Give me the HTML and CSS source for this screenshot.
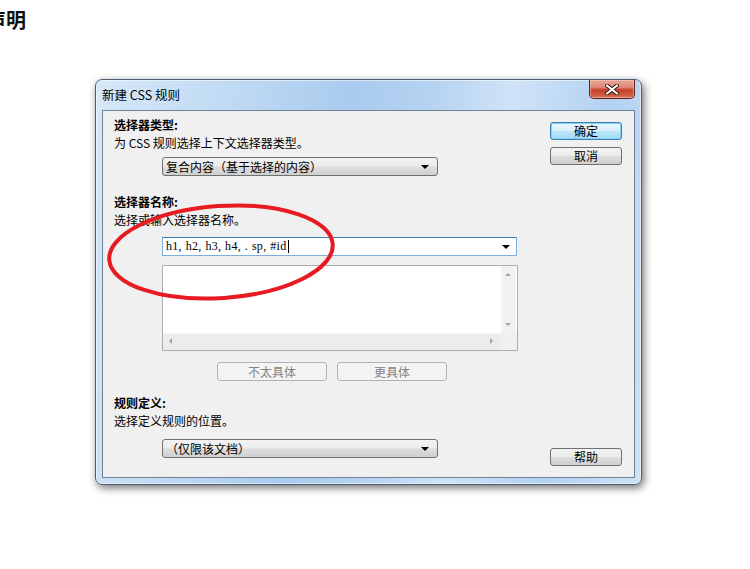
FILE: index.html
```html
<!DOCTYPE html>
<html>
<head>
<meta charset="utf-8">
<link rel="stylesheet" href="styles.css">
</head>
<body>
<div class="page">
  <div class="heading">声明</div>
  <div class="window">
    <div class="titlebar">
      <span class="title">新建 CSS 规则</span>
      <div class="close">
        <svg width="14" height="11" viewBox="0 0 14 11">
          <path d="M2 1.5 L12 9.5 M12 1.5 L2 9.5" stroke="#3a1510" stroke-width="4" stroke-linecap="round"/>
          <path d="M2 1.5 L12 9.5 M12 1.5 L2 9.5" stroke="#ffffff" stroke-width="2.2" stroke-linecap="round"/>
        </svg>
      </div>
    </div>
    <div class="client">
      <div class="main">
        <div class="label">选择器类型:</div>
        <div class="desc">为 CSS 规则选择上下文选择器类型。</div>
        <div class="select sel1"><span>复合内容（基于选择的内容）</span><i class="arrow"></i></div>
        <div class="label l2">选择器名称:</div>
        <div class="desc">选择或输入选择器名称。</div>
        <div class="combo"><span class="val">h1, h2, h3, h4, . sp, #id</span><span class="caret"></span><i class="arrow"></i></div>
        <div class="list">
          <div class="list-top">
            <div class="list-area"></div>
            <div class="vscroll"><i class="up"></i><i class="down"></i></div>
          </div>
          <div class="list-bottom">
            <div class="hscroll"><i class="left"></i><i class="right"></i></div>
            <div class="corner"></div>
          </div>
        </div>
        <div class="spec-row">
          <div class="btn disabled wide">不太具体</div>
          <div class="btn disabled wide">更具体</div>
        </div>
        <div class="label l3">规则定义:</div>
        <div class="desc">选择定义规则的位置。</div>
        <div class="select sel3"><span>（仅限该文档）</span><i class="arrow"></i></div>
      </div>
      <div class="side">
        <div class="btn default">确定</div>
        <div class="btn second">取消</div>
        <div class="spacer"></div>
        <div class="btn">帮助</div>
      </div>
    </div>
  </div>
  <svg class="mark" width="750" height="569" viewBox="0 0 750 569">
    <ellipse cx="221" cy="252" rx="112" ry="46" transform="rotate(-4 221 252)" fill="none" stroke="#e81b23" stroke-width="4"/>
  </svg>
</div>
</body>
</html>
```

FILE: styles.css
```css
html, body {
  margin: 0;
  padding: 0;
  background: #ffffff;
}
.page {
  position: relative;
  width: 750px;
  height: 569px;
  overflow: hidden;
  font-family: "Noto Sans CJK SC", "Liberation Sans", sans-serif;
  font-size: 12px;
  color: #000;
}
.heading {
  height: 40px;
  line-height: 40px;
  margin-left: -14px;
  font-size: 20px;
  font-weight: bold;
  color: #111;
}
.window {
  box-sizing: border-box;
  margin: 39px 0 0 95px;
  width: 547px;
  height: 406px;
  border: 1px solid #4b5c70;
  border-radius: 7px;
  padding: 0 6px 6px 6px;
  display: flex;
  flex-direction: column;
  background: linear-gradient(100deg, #d6e8f9 0%, #c0daf3 22%, #a9cbee 42%, #b6d3f1 55%, #cfe3f7 68%, #b3d1f1 84%, #cde2f6 100%);
  box-shadow: 2px 3px 9px rgba(0,0,0,0.55), inset 0 0 0 1px rgba(255,255,255,0.55);
}
.titlebar {
  height: 30px;
  display: flex;
  justify-content: space-between;
  align-items: flex-start;
}
.title {
  padding-top: 7px;
  line-height: 16px;
  font-size: 12.5px;
  color: #000;
}
.close {
  box-sizing: border-box;
  width: 46px;
  height: 19px;
  border: 1px solid #5e2219;
  border-top: none;
  border-radius: 0 0 5px 5px;
  background: linear-gradient(#e9a799 0%, #dc8a78 40%, #c5402d 55%, #cc5b3f 85%, #d8806a 100%);
  box-shadow: inset 0 0 0 1px rgba(255,210,200,0.45);
  display: flex;
  align-items: center;
  justify-content: center;
}
.client {
  flex: 1;
  display: flex;
  border: 1px solid #6f8195;
  background: #f0f0f0;
}
.main {
  flex: 1;
  display: flex;
  flex-direction: column;
  padding: 6px 0 0 11px;
}
.label {
  line-height: 16px;
  height: 16px;
  font-weight: bold;
}
.desc {
  margin-top: 2px;
  line-height: 16px;
  height: 16px;
}
.l2 { margin-top: 18px; }
.l3 { margin-top: 14px; }
.select {
  box-sizing: border-box;
  position: relative;
  width: 276px;
  height: 19px;
  margin-left: 48px;
  border: 1px solid #707070;
  border-radius: 3px;
  background: linear-gradient(#f3f3f3 0%, #ebebeb 48%, #dddddd 52%, #d0d0d0 100%);
  padding-left: 3px;
  line-height: 17px;
  display: flex;
  align-items: center;
}
.sel1 { margin-top: 6px; }
.sel3 { margin-top: 10px; }
.arrow {
  position: absolute;
  right: 8px;
  top: 7px;
  width: 0;
  height: 0;
  border-left: 4px solid transparent;
  border-right: 4px solid transparent;
  border-top: 4px solid #000;
}
.combo {
  box-sizing: border-box;
  position: relative;
  width: 355px;
  height: 19px;
  margin: 9px 0 0 48px;
  border: 1px solid #7eaedc;
  border-top-color: #3d7bb0;
  background: #fff;
  padding-left: 3px;
  display: flex;
  align-items: center;
}
.val {
  font-family: "Liberation Serif", "DejaVu Serif", serif;
  font-size: 12px;
  letter-spacing: 0.3px;
  word-spacing: 0.5px;
}
.caret {
  width: 1px;
  height: 13px;
  background: #000;
  margin-left: 1px;
}
.combo .arrow { right: 6px; top: 7px; }
.list {
  box-sizing: border-box;
  width: 356px;
  height: 86px;
  margin: 9px 0 0 48px;
  border: 1px solid #adadad;
  background: #fff;
  display: flex;
  flex-direction: column;
}
.list-top {
  flex: 1;
  display: flex;
}
.list-area { flex: 1; }
.vscroll, .hscroll {
  position: relative;
  background: #f2f2f2;
}
.vscroll {
  width: 17px;
  box-shadow: inset 1px 0 0 #ffffff, inset -1px 0 0 #ffffff;
}
.list-bottom {
  height: 17px;
  display: flex;
}
.hscroll {
  flex: 1;
  background: #ececec;
  box-shadow: inset 0 1px 0 #f8f8f8;
}
.corner {
  width: 17px;
  background: #f0f0f0;
}
.up, .down, .left, .right {
  position: absolute;
  width: 0;
  height: 0;
}
.up {
  left: 5px; top: 7px;
  border-left: 3.5px solid transparent;
  border-right: 3.5px solid transparent;
  border-bottom: 3.5px solid #a3a3a3;
}
.down {
  left: 5px; bottom: 7px;
  border-left: 3.5px solid transparent;
  border-right: 3.5px solid transparent;
  border-top: 3.5px solid #a3a3a3;
}
.left {
  left: 6px; top: 5px;
  border-top: 3.5px solid transparent;
  border-bottom: 3.5px solid transparent;
  border-right: 3.5px solid #a3a3a3;
}
.right {
  right: 7px; top: 5px;
  border-top: 3.5px solid transparent;
  border-bottom: 3.5px solid transparent;
  border-left: 3.5px solid #a3a3a3;
}
.spec-row {
  display: flex;
  gap: 10px;
  margin: 11px 0 0 103px;
}
.btn {
  box-sizing: border-box;
  width: 72px;
  height: 18px;
  border: 1px solid #707070;
  border-radius: 3px;
  background: linear-gradient(#f3f3f3 0%, #ebebeb 48%, #dddddd 52%, #d0d0d0 100%);
  display: flex;
  align-items: center;
  justify-content: center;
  line-height: 16px;
  color: #000;
}
.btn.wide {
  width: 110px;
  height: 19px;
}
.btn.disabled {
  border-color: #adb2b5;
  background: #f4f4f4;
  color: #838383;
}
.btn.default {
  border-color: #3c7fb1;
  background: linear-gradient(#eaf6fd 0%, #d9f0fc 48%, #bee6fd 52%, #a7d9f5 100%);
  box-shadow: inset 0 0 0 1px #7fd3f8;
}
.side {
  width: 72px;
  margin-right: 12px;
  padding: 11px 0 11px 0;
  display: flex;
  flex-direction: column;
}
.second { margin-top: 7px; }
.spacer { flex: 1; }
.mark {
  position: absolute;
  left: 0;
  top: 0;
  pointer-events: none;
}
```
